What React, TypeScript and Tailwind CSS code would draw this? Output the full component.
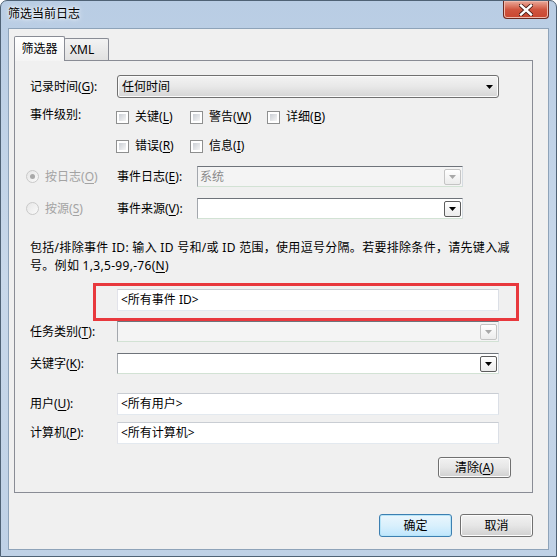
import React from "react";

const FONT = "font-['Noto_Sans','Noto_Sans_CJK_SC',sans-serif]";

// underlined access key letter
function K({ c }: { c: string }) {
  return <span className="underline underline-offset-[2px] decoration-[1px]">{c}</span>;
}

function Arrow({ disabled }: { disabled?: boolean }) {
  return (
    <svg width="7" height="4" viewBox="0 0 7 4">
      <path d="M0 0h7L3.5 4z" fill={disabled ? "#a8a8a8" : "#000"} />
    </svg>
  );
}

function Combo({ w, text, disabled }: { w: string; text?: string; disabled?: boolean }) {
  return (
    <div
      className={`${w} h-[21px] flex items-center border border-t-[#6e737a] border-l-[#a3a7ad] border-r-[#d5dbe1] border-b-[#d2e2d4] ${
        disabled ? "bg-[#f4f4f4]" : "bg-white"
      }`}
    >
      <div className="flex-1 pl-[2px] text-[12px] leading-none text-[#8a8a8a]">{text}</div>
      <div
        className={`w-[17px] h-[16px] mr-[1px] rounded-[2px] border flex items-center justify-center bg-gradient-to-b from-white to-[#ececec] ${
          disabled ? "border-[#c4c4c4]" : "border-[#5c5c5c]"
        }`}
      >
        <Arrow disabled={disabled} />
      </div>
    </div>
  );
}

function Field({ text }: { text: string }) {
  return (
    <div className="w-[382px] h-[22px] bg-white border border-t-[#c9cdd3] border-l-[#e2e3ea] border-r-[#dbdfe6] border-b-[#e3e9ef] flex items-center pl-[3px] text-[12px] leading-none text-black">
      {text}
    </div>
  );
}

function Check({ label, k, w }: { label: string; k: string; w: string }) {
  return (
    <div className={`${w} flex items-center`}>
      <div className="w-[13px] h-[13px] border border-[#8e8f8f] bg-white p-[2px]">
        <div className="w-full h-full bg-gradient-to-br from-[#cbcfd5] to-[#f6f6f6]" />
      </div>
      <span className="ml-[6px] text-[12px] leading-none">
        {label}(<K c={k} />)
      </span>
    </div>
  );
}

function Radio({ label, k, checked }: { label: string; k: string; checked?: boolean }) {
  return (
    <div className="w-[102px] pl-[11px] flex items-center">
      <div className="w-[13px] h-[13px] rounded-full border border-[#c9c9c9] bg-gradient-to-br from-[#e6e6e6] to-[#fafafa] flex items-center justify-center">
        {checked && <div className="w-[5px] h-[5px] rounded-full bg-[#a9a9a9]" />}
      </div>
      <span className="ml-[6px] text-[12px] leading-none text-[#a3a3a3]">
        {label}(<K c={k} />)
      </span>
    </div>
  );
}

function Button({ children, primary }: { children: React.ReactNode; primary?: boolean }) {
  return (
    <div
      className={`w-[73px] h-[23px] rounded-[3px] border flex items-center justify-center text-[12px] leading-none text-black ${
        primary
          ? "border-[#3c7fb1] bg-gradient-to-b from-[#eaf6fd] via-[#d9f0fc] to-[#bee6fd] shadow-[inset_0_0_0_1px_#b6e4f8]"
          : "border-[#707070] bg-gradient-to-b from-[#f2f2f2] via-[#e6e6e6] to-[#d0d0d0] shadow-[inset_0_0_0_1px_#fcfcfc]"
      }`}
    >
      {children}
    </div>
  );
}

export default function App() {
  return (
    <div className={`${FONT} w-[557px] h-[557px] flex flex-col bg-gradient-to-b from-[#b9cde4] via-[#c8d8ea] to-[#bfd1e6] border border-[#4f6275] rounded-t-[7px] overflow-hidden text-black`}>
      {/* title bar */}
      <div className="h-[27px] flex justify-between shrink-0">
        <div className="pl-[7px] pt-[7px] text-[12px] leading-none [text-shadow:0_0_6px_#fff,0_0_3px_#fff]">筛选当前日志</div>
        <div className="mr-[7px] w-[46px] h-[18px] rounded-b-[4px] border border-t-0 border-[#6b2a20] bg-gradient-to-b from-[#e9a99a] via-[#d0553f] to-[#c9462f] flex items-center justify-center shadow-[inset_0_0_0_1px_#f0b9ab]">
          <svg width="14" height="12" viewBox="0 0 14 12">
            <path d="M2 1.5l10 9M12 1.5l-10 9" stroke="#4a1d16" strokeWidth="4.2" strokeLinecap="square" />
            <path d="M2 1.5l10 9M12 1.5l-10 9" stroke="#fff" strokeWidth="2.4" strokeLinecap="square" />
          </svg>
        </div>
      </div>

      {/* client area */}
      <div className="mx-[7px] mb-[6px] flex-1 bg-[#f0f0f0] border border-[#8ea3b9] flex flex-col">
        {/* tabs */}
        <div className="ml-[5px] mt-[7px] h-[24px] flex items-end relative z-10">
          <div className="w-[51px] h-[25px] -mb-px border border-b-0 border-[#898c95] bg-gradient-to-b from-white to-[#f4f4f4] flex items-center justify-center text-[12px] leading-none rounded-t-[2px]">
            筛选器
          </div>
          <div className="w-[45px] h-[22px] -ml-px border border-b-0 border-[#898c95] bg-gradient-to-b from-[#f3f3f3] to-[#e1e1e1] flex items-center pl-[5px] text-[12px] leading-none rounded-t-[2px]">
            XML
          </div>
        </div>

        {/* tab page */}
        <div className="ml-[5px] w-[519px] h-[433px] border border-[#898c95] bg-[#f0f0f0] flex flex-col">
          <div className="mt-[14px] pl-[15px] flex items-center">
            <div className="w-[87px] text-[12px] leading-none">
              记录时间(<K c="G" />):
            </div>
            <div className="w-[382px] h-[23px] rounded-[3px] border border-[#707070] bg-gradient-to-b from-[#f3f3f3] via-[#e8e8e8] to-[#d5d5d5] shadow-[inset_0_0_0_1px_#fbfbfb] flex items-center pl-[4px] pr-[5px] text-[12px] leading-none">
              <span className="flex-1">任何时间</span>
              <Arrow />
            </div>
          </div>

          <div className="mt-[9px] h-[20px] pl-[15px] flex items-center">
            <div className="w-[86px] text-[12px] leading-none -mt-[4px]">事件级别:</div>
            <Check label="关键" k="L" w="w-[74px]" />
            <Check label="警告" k="W" w="w-[77px]" />
            <Check label="详细" k="B" w="w-[80px]" />
          </div>
          <div className="mt-[9px] h-[20px] pl-[101px] flex items-center">
            <Check label="错误" k="R" w="w-[74px]" />
            <Check label="信息" k="I" w="w-[74px]" />
          </div>

          <div className="mt-[10px] h-[21px] flex items-center">
            <Radio label="按日志" k="O" checked />
            <div className="w-[80px] text-[12px] leading-none">
              事件日志(<K c="E" />):
            </div>
            <Combo w="w-[266px]" text="系统" disabled />
          </div>
          <div className="mt-[11px] h-[21px] flex items-center">
            <Radio label="按源" k="S" />
            <div className="w-[80px] text-[12px] leading-none">
              事件来源(<K c="V" />):
            </div>
            <Combo w="w-[266px]" />
          </div>

          <div className="mt-[20px] pl-[15px] text-[12px] leading-[18px] tracking-[0.3px] whitespace-nowrap">
            包括/排除事件 ID: 输入 ID 号和/或 ID 范围，使用逗号分隔。若要排除条件，请先键入减
            <br />
            号。例如 1,3,5-99,-76(<K c="N" />)
          </div>

          <div className="mt-[8px] ml-[78px] w-[426px] border-[3px] border-[#e8383d] pl-[21px] pr-[17px] pt-[3px] pb-[7px]">
            <Field text="<所有事件 ID>" />
          </div>

          <div className="h-[21px] pl-[15px] flex items-center">
            <div className="w-[87px] text-[12px] leading-none">
              任务类别(<K c="T" />):
            </div>
            <Combo w="w-[382px]" disabled />
          </div>
          <div className="mt-[11px] h-[21px] pl-[15px] flex items-center">
            <div className="w-[87px] text-[12px] leading-none">
              关键字(<K c="K" />):
            </div>
            <Combo w="w-[382px]" />
          </div>

          <div className="mt-[19px] pl-[15px] flex items-center">
            <div className="w-[87px] text-[12px] leading-none">
              用户(<K c="U" />):
            </div>
            <Field text="<所有用户>" />
          </div>
          <div className="mt-[7px] pl-[15px] flex items-center">
            <div className="w-[87px] text-[12px] leading-none">
              计算机(<K c="P" />):
            </div>
            <Field text="<所有计算机>" />
          </div>

          <div className="mt-[13px] pr-[21px] flex justify-end">
            <div className="w-[73px] h-[21px] rounded-[3px] border border-[#707070] bg-gradient-to-b from-[#f2f2f2] via-[#e6e6e6] to-[#d0d0d0] shadow-[inset_0_0_0_1px_#fcfcfc] flex items-center justify-center text-[12px] leading-none">
              清除(<K c="A" />)
            </div>
          </div>
        </div>

        {/* dialog buttons */}
        <div className="mt-[21px] pr-[15px] flex justify-end gap-[8px]">
          <Button primary>确定</Button>
          <Button>取消</Button>
        </div>
      </div>
    </div>
  );
}
